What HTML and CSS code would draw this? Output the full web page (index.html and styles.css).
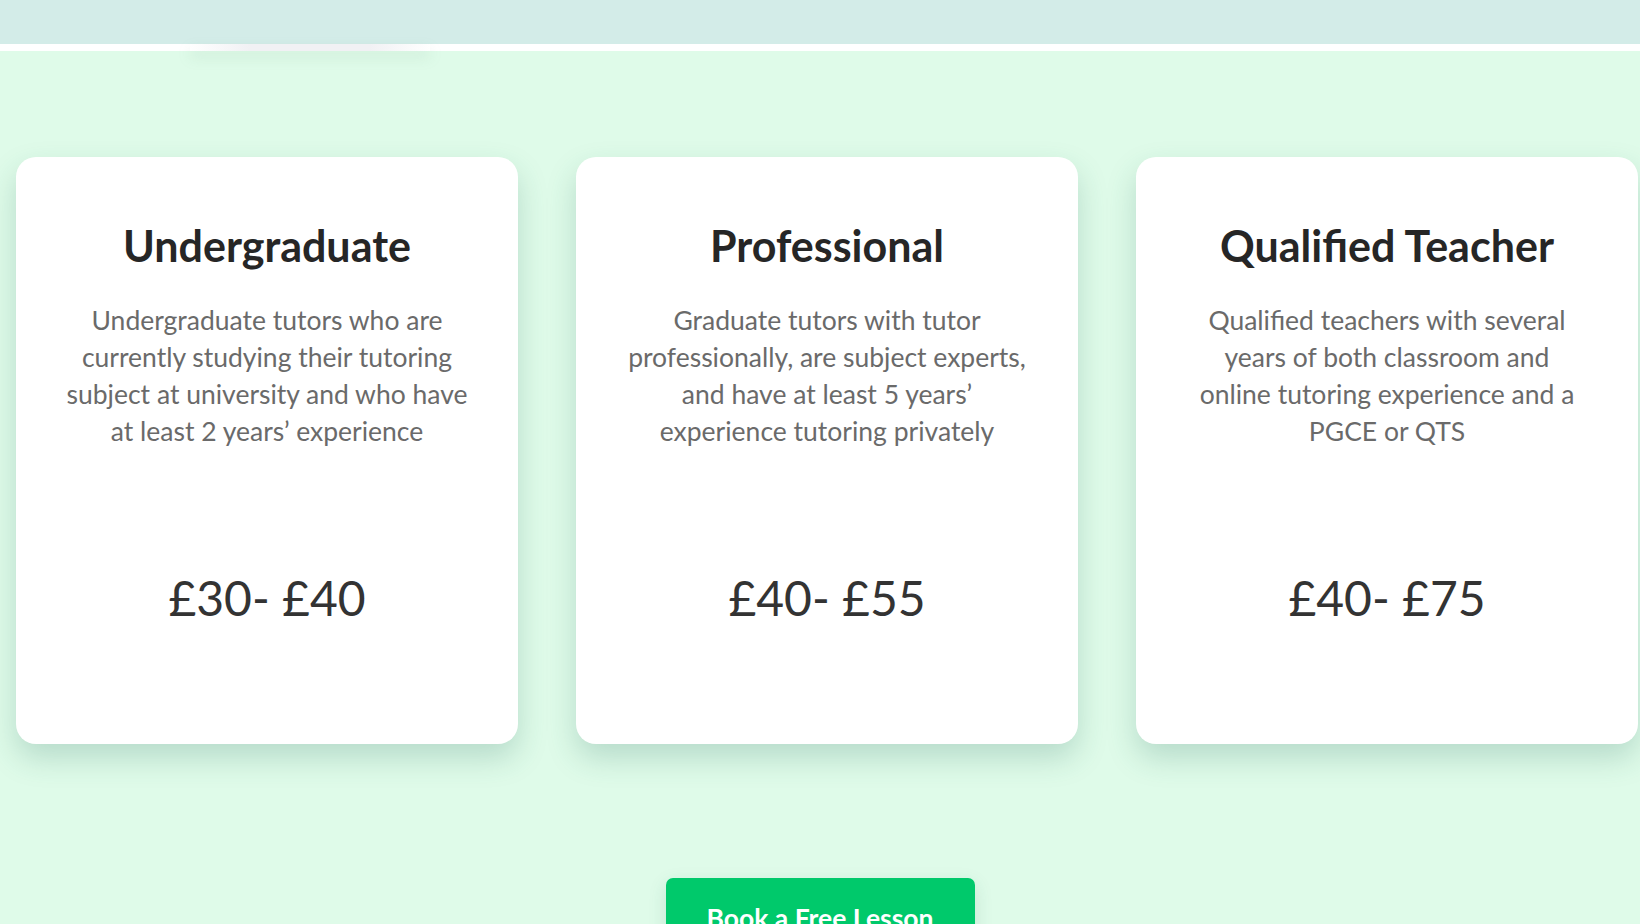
FILE: index.html
```html
<!DOCTYPE html>
<html lang="en">
<head>
<meta charset="utf-8">
<title>Tutor Pricing</title>
<link rel="stylesheet" href="styles.css">
</head>
<body>
<header class="topbar">
  <div class="topbar-shadow"></div>
</header>
<main class="pricing">
  <div class="cards">
    <div class="card">
      <h2 class="card-title">Undergraduate</h2>
      <p class="card-desc">Undergraduate tutors who are currently studying their tutoring subject at university and who have at least 2 years’ experience</p>
      <div class="card-price">£30- £40</div>
    </div>
    <div class="card">
      <h2 class="card-title">Professional</h2>
      <p class="card-desc">Graduate tutors with tutor professionally, are subject experts, and have at least 5 years’ experience tutoring privately</p>
      <div class="card-price">£40- £55</div>
    </div>
    <div class="card">
      <h2 class="card-title">Qualified Teacher</h2>
      <p class="card-desc">Qualified teachers with several years of both classroom and online tutoring experience and a PGCE or QTS</p>
      <div class="card-price">£40- £75</div>
    </div>
  </div>
  <div class="cta-row">
    <a class="cta" href="#">Book a Free Lesson</a>
  </div>
</main>
</body>
</html>
```
FILE: styles.css
```css
html, body {
  margin: 0;
  padding: 0;
}
body {
  background: #dffbe9;
  font-family: Lato, "Noto Sans", sans-serif;
  overflow: hidden;
  height: 924px;
}
.topbar {
  position: relative;
  height: 44px;
  background: #d3ece8;
  border-bottom: 7px solid #ffffff;
}
.topbar-shadow {
  position: absolute;
  left: 190px;
  width: 240px;
  top: 44px;
  height: 7px;
  background: linear-gradient(90deg, rgba(240,240,245,0), #f1f1f4 25%, #f1f1f4 75%, rgba(240,240,245,0));
  box-shadow: 0 6px 14px rgba(120, 160, 140, 0.18);
}
.pricing {
  padding-top: 106px;
}
.cards {
  display: flex;
  gap: 58px;
  margin-left: 16px;
  width: 1622px;
}
.card {
  box-sizing: border-box;
  width: 502px;
  height: 587px;
  background: #ffffff;
  border-radius: 20px;
  box-shadow: 0 14px 30px rgba(40, 110, 95, 0.22);
  padding: 64px 0 0;
  display: flex;
  flex-direction: column;
  align-items: center;
  text-align: center;
}
.card-title {
  margin: 0;
  font-size: 43px;
  line-height: 50px;
  font-weight: 700;
  color: #262626;
}
.card-desc {
  width: 401px;
  margin: 31px 0 0;
  font-size: 26.5px;
  line-height: 37px;
  color: #6a6a6a;
}
.card-price {
  margin-top: auto;
  margin-bottom: 116px;
  font-size: 48px;
  line-height: 60px;
  color: #333333;
}
.cta-row {
  display: flex;
  justify-content: center;
  margin-top: 134px;
}
.cta {
  display: block;
  width: 309px;
  height: 64px;
  box-sizing: border-box;
  background: #00c96b;
  border-radius: 7px;
  color: #ffffff;
  text-decoration: none;
  font-size: 26.5px;
  font-weight: 700;
  text-align: center;
  line-height: 80px;
  box-shadow: 0 6px 18px rgba(40, 110, 95, 0.15);
}
```
